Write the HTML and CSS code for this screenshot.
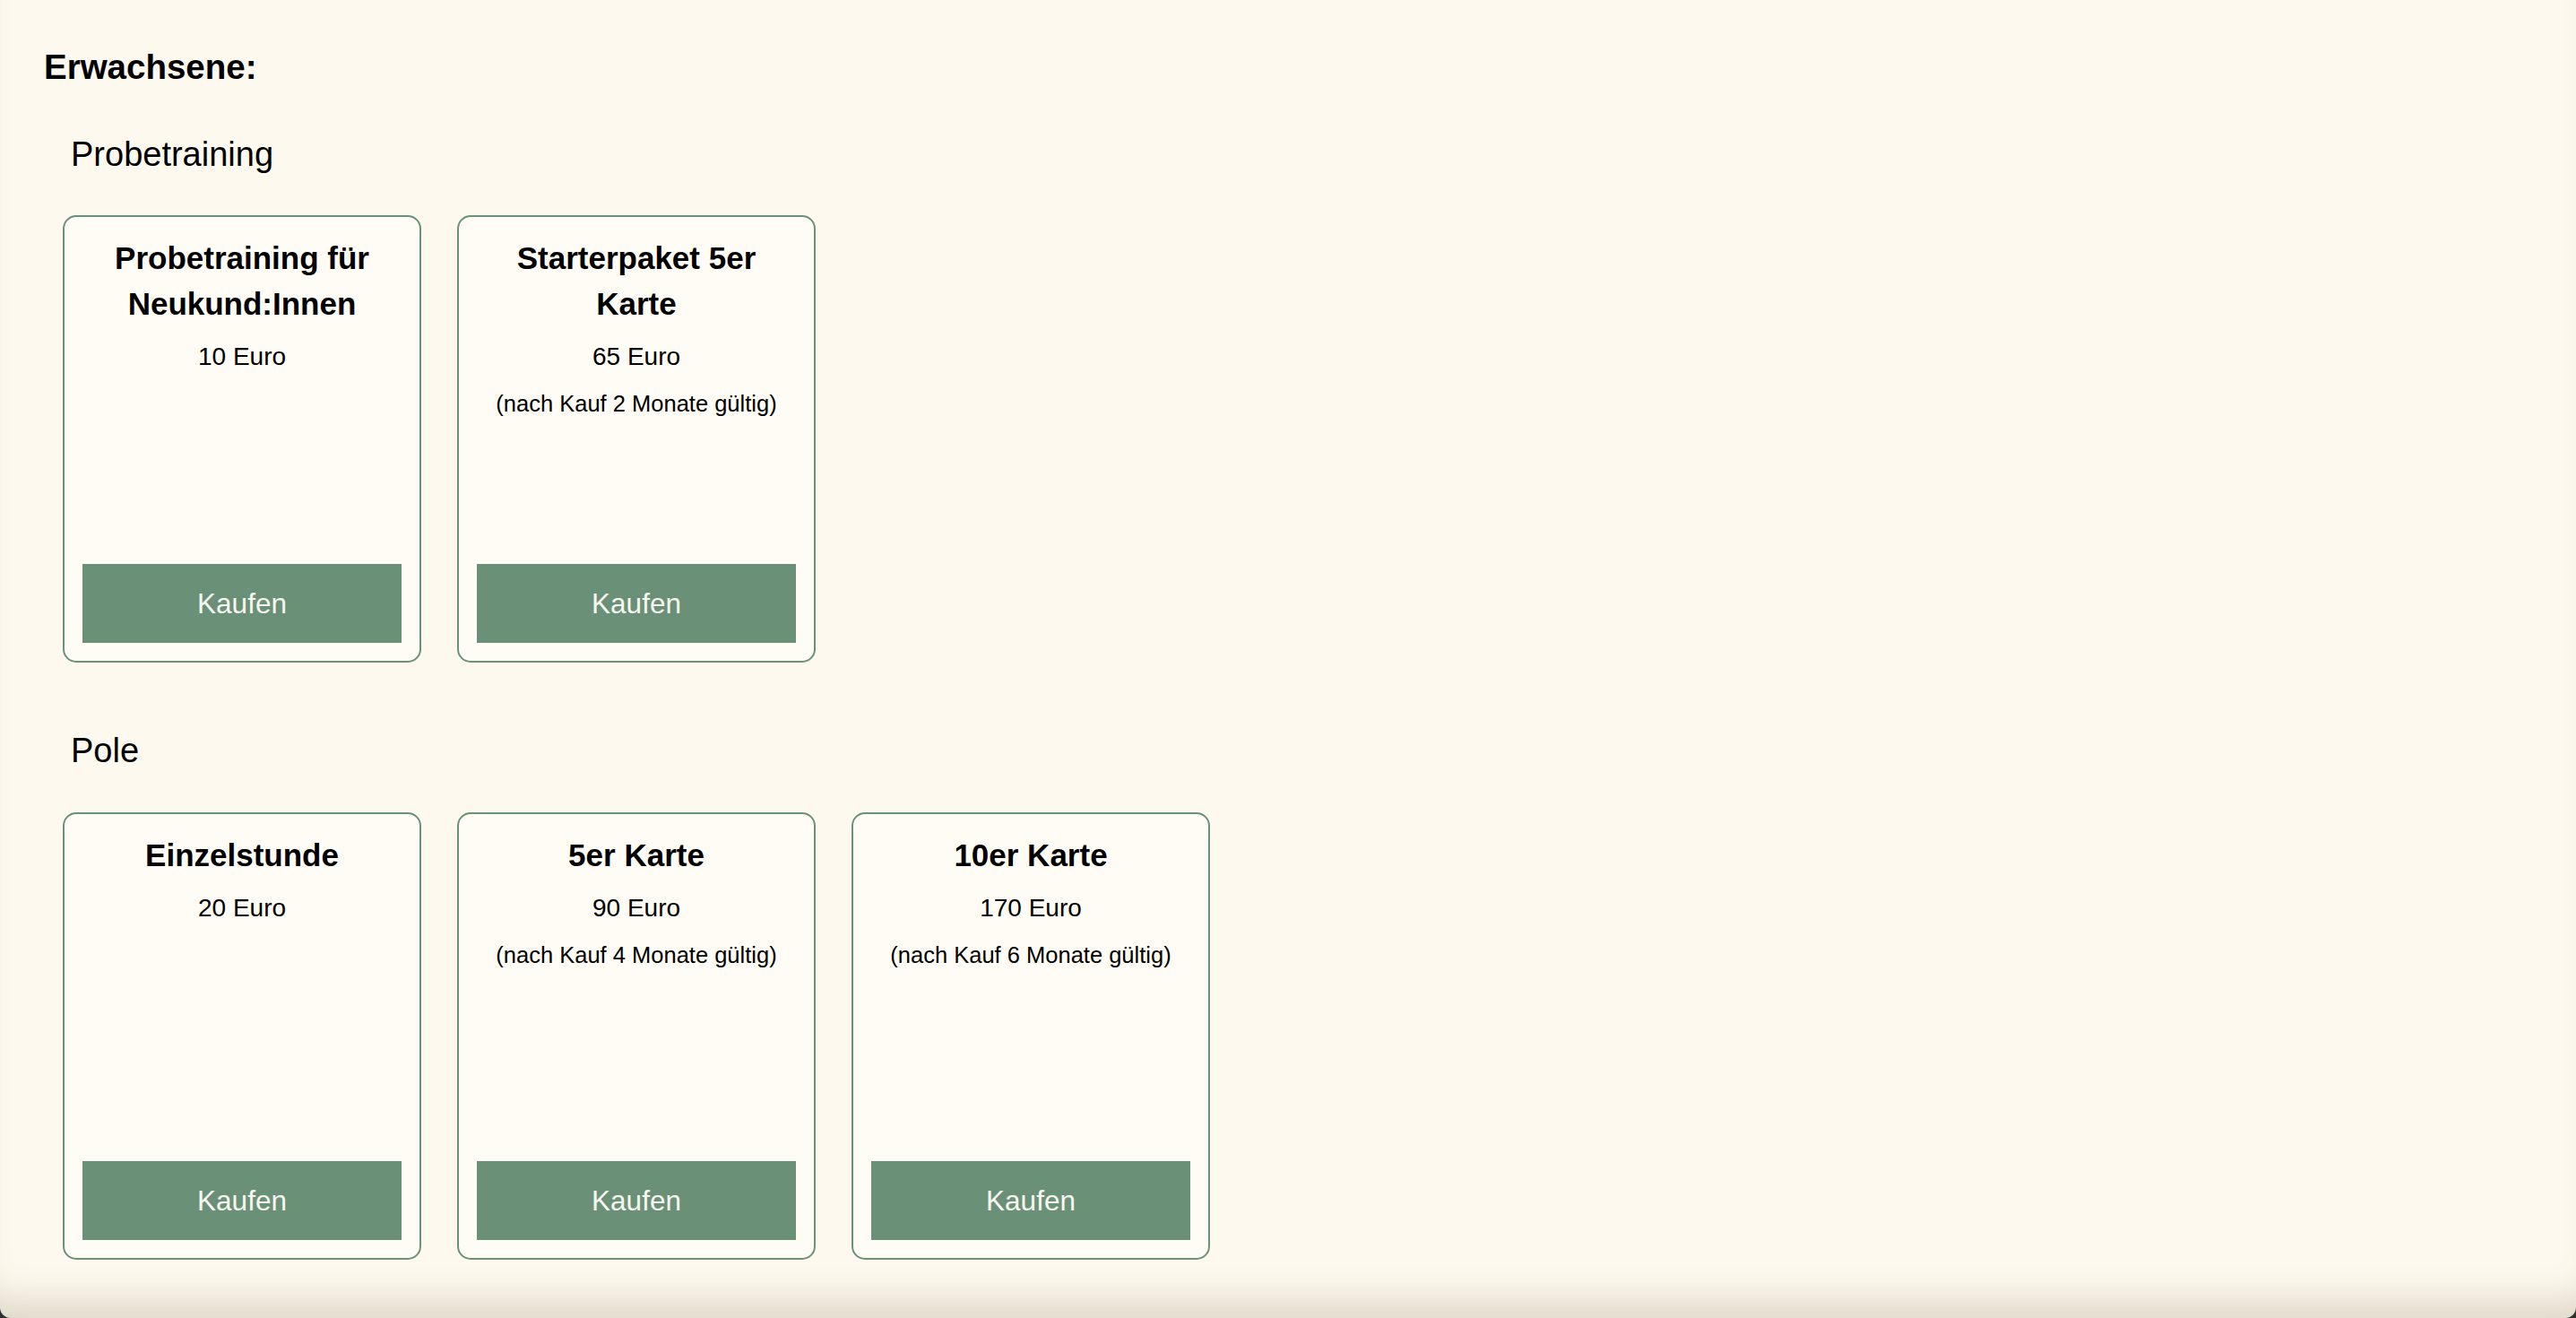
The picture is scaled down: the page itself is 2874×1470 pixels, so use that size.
FILE: index.html
```html
<!DOCTYPE html>
<html lang="de">
<head>
<meta charset="utf-8">
<title>Preise</title>
<link rel="stylesheet" href="styles.css">
</head>
<body>
<div class="window">
  <main class="page">
    <h2 class="group-title">Erwachsene:</h2>

    <section class="category">
      <h3 class="category-title">Probetraining</h3>
      <div class="cards">
        <div class="card">
          <div class="card-title">Probetraining für Neukund:Innen</div>
          <div class="price">10 Euro</div>
          <button class="buy">Kaufen</button>
        </div>
        <div class="card">
          <div class="card-title">Starterpaket 5er Karte</div>
          <div class="price">65 Euro</div>
          <div class="note">(nach Kauf 2 Monate gültig)</div>
          <button class="buy">Kaufen</button>
        </div>
      </div>
    </section>

    <section class="category second">
      <h3 class="category-title">Pole</h3>
      <div class="cards">
        <div class="card">
          <div class="card-title">Einzelstunde</div>
          <div class="price">20 Euro</div>
          <button class="buy">Kaufen</button>
        </div>
        <div class="card">
          <div class="card-title">5er Karte</div>
          <div class="price">90 Euro</div>
          <div class="note">(nach Kauf 4 Monate gültig)</div>
          <button class="buy">Kaufen</button>
        </div>
        <div class="card">
          <div class="card-title">10er Karte</div>
          <div class="price">170 Euro</div>
          <div class="note">(nach Kauf 6 Monate gültig)</div>
          <button class="buy">Kaufen</button>
        </div>
      </div>
    </section>
  </main>
</div>
</body>
</html>
```

FILE: styles.css
```css
html {
  background: #2e2e2e;
}

body {
  margin: 0;
  font-family: "Liberation Sans", Arial, sans-serif;
  color: #000;
}

.window {
  min-height: 1470px;
  box-sizing: border-box;
  background: #fdf9ee;
  border-radius: 0 0 12px 12px;
  box-shadow: inset 0 -46px 40px -28px rgba(120, 105, 80, 0.24);
  overflow: hidden;
}

.page {
  padding: 53px 0 0 49px;
}

.group-title {
  margin: 0;
  font-size: 38.5px;
  line-height: 44px;
  font-weight: bold;
}

.category {
  margin-top: 50px;
}

.category.second {
  margin-top: 73px;
}

.category-title {
  margin: 0 0 0 30px;
  padding-top: 3px;
  font-size: 38px;
  line-height: 44px;
  font-weight: normal;
}

.cards {
  display: flex;
  gap: 40px;
  margin: 46px 0 0 21px;
}

.second .cards {
  margin-top: 47px;
}

.card {
  box-sizing: border-box;
  width: 400px;
  height: 499px;
  padding: 20px;
  border: 2px solid #6b9179;
  border-radius: 15px;
  background: #fefcf4;
  display: flex;
  flex-direction: column;
  align-items: center;
  text-align: center;
}

.card-title {
  font-size: 35px;
  line-height: 51px;
  font-weight: bold;
}

.price {
  margin-top: 14px;
  font-size: 28px;
  line-height: 40px;
}

.note {
  margin-top: 14px;
  font-size: 25.5px;
  line-height: 37px;
}

.buy {
  margin-top: auto;
  width: 100%;
  height: 88px;
  border: none;
  border-radius: 0;
  background: #6a9077;
  color: #f7f7f0;
  font-family: "Liberation Sans", Arial, sans-serif;
  font-size: 31.5px;
  padding: 0;
}
```
